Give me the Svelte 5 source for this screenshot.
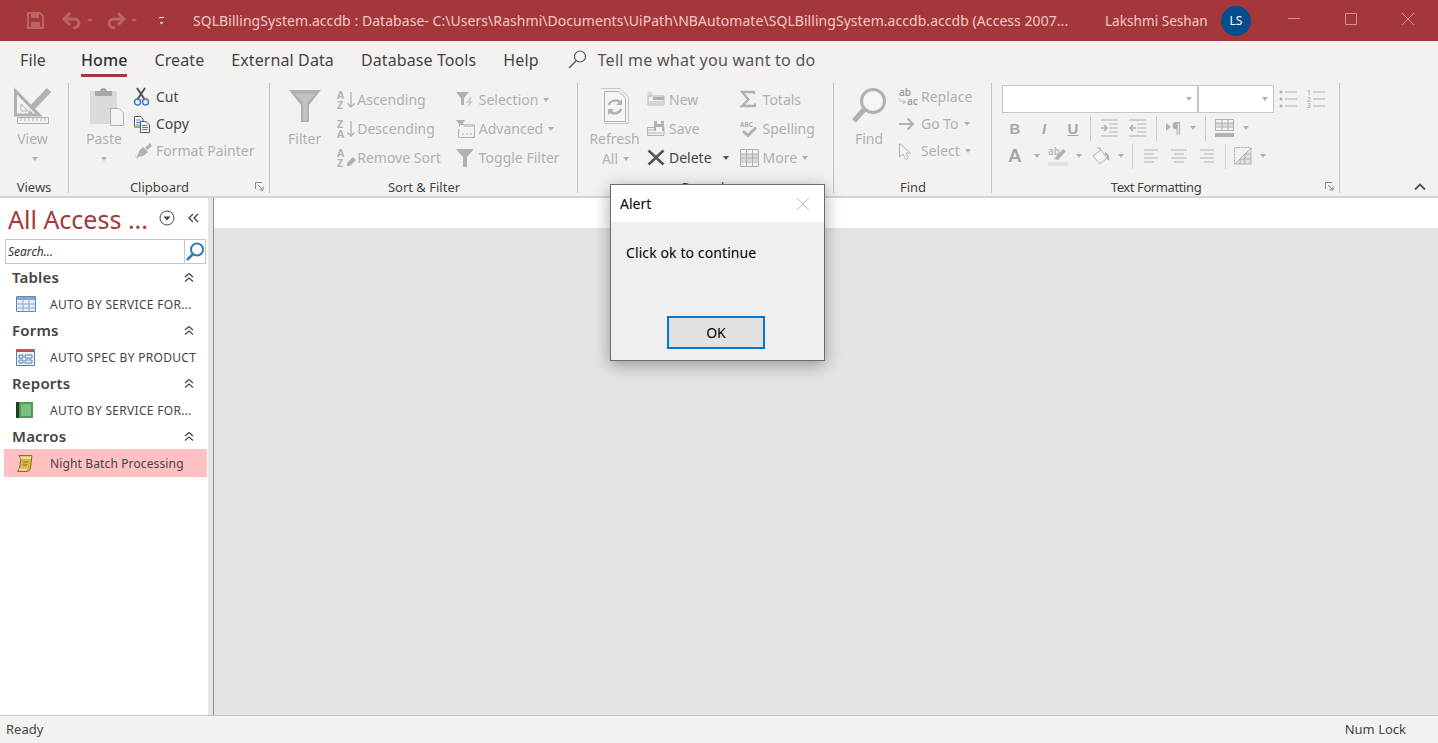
<script>
  const G = '#b3b1b0';
  const Q = '#bb6466';
  const icons = {
    save: `<path d="M1 1H13L16 4V16H1Z" fill="none" stroke="${Q}" stroke-width="2"/><path d="M4 2H12V6H4ZM4 10H13V15H4Z" fill="${Q}"/>`,
    undo: `<path d="M2 6H11C15 6 16 9 16 10C16 13 13 15 10 15" fill="none" stroke="${Q}" stroke-width="3"/><path d="M7 0L1 6L7 12" fill="none" stroke="${Q}" stroke-width="3"/>`,
    redo: `<path d="M16 6H7C3 6 2 9 2 10C2 13 5 15 8 15" fill="none" stroke="${Q}" stroke-width="3"/><path d="M11 0L17 6L11 12" fill="none" stroke="${Q}" stroke-width="3"/>`,
    view: `<path d="M1.500 3V27H25Z" fill="none" stroke="${G}" stroke-width="3"/><path d="M7 16V23H14Z" fill="#f3f2f1" stroke="${G}"/><path d="M35 2L17 21" stroke="${G}" stroke-width="6"/><path d="M14 27L15 22L19 25Z" fill="${G}"/><path d="M3.500 29.500H34.500V35.500H3.500Z" fill="#f3f2f1" stroke="${G}"/><path d="M7 30V33M11 30V33M15 30V33M19 30V33M23 30V33M27 30V33M31 30V33" stroke="${G}"/>`,
    paste: `<path d="M0 3H27V36H0Z" fill="#dcdadb"/><path d="M5 3H10C10 -1 17 -1 17 3H22V8H5Z" fill="#a9a7a7"/><path d="M20.500 20.500H29L33.500 25V37.500H20.500Z" fill="#f4f3f4" stroke="${G}"/>`,
    cut: `<path d="M6 0L14 12M14 0L6 12" stroke="#555" stroke-width="2"/><circle cx="6.500" cy="14" r="3" fill="none" stroke="#3f7fc1" stroke-width="1.500"/><circle cx="14.500" cy="14" r="3" fill="none" stroke="#3f7fc1" stroke-width="1.500"/>`,
    copy: `<path d="M3.500 1.500H10L12 4V12H3.500Z" fill="#fff" stroke="#555"/><path d="M9.500 6.500H15L18.500 10V17.500H9.500Z" fill="#fff" stroke="#555"/><path d="M5 5H10M5 7.500H9M5 10H9M11 10.500H16.500M11 12.500H17M11 14.500H17" stroke="#3f7fc1"/>`,
    painter: `<path d="M12 5L17 10L12 14L6 15L8 9Z" fill="${G}"/><path d="M14 6L19 1L21 4L16 8Z" fill="${G}"/><path d="M3 12L8 16L6 17Z" fill="#cfcdcc"/>`,
    filter: `<path d="M0 0H32L20 15V32H12V15Z" fill="${G}"/><path d="M6 4H26L18 13V30H14V13Z" fill="#c4c2c1"/>`,
    asc: `<text x="0" y="8" class="az">A</text><text x="0" y="17.500" class="az">Z</text><path d="M14 1V16M10.500 12.500L14 16L17.500 12.500" fill="none" stroke="${G}" stroke-width="1.300"/>`,
    desc: `<text x="0" y="8" class="az">Z</text><text x="0" y="17.500" class="az">A</text><path d="M14 1V16M10.500 12.500L14 16L17.500 12.500" fill="none" stroke="${G}" stroke-width="1.300"/>`,
    unsort: `<text x="0" y="8" class="az">A</text><text x="0" y="17.500" class="az">Z</text><path d="M10 14L16 8L19 11L13 17H10Z" fill="${G}"/>`,
    selection: `<path d="M0 1H13L8 7V14H5V7Z" fill="${G}"/><path d="M14 6L10 12H13L11 17L17 10H14L16 6Z" fill="#cfcdcc"/>`,
    advanced: `<path d="M0 0H9L6 4V8H3V4Z" fill="${G}"/><path d="M4.500 4.500H18.500V17.500H2.500V9" fill="#f3f2f1" stroke="${G}"/><path d="M8 4H19V7H8Z" fill="#cfcdcc"/><path d="M6 14H8M10 14H12M14 14H16" stroke="${G}"/>`,
    toggle: `<path d="M0 0H18L11 8V18H7V8Z" fill="${G}"/>`,
    refresh: `<path d="M.5 .500H19L27.500 9V35.500H3.500" fill="none" stroke="#c7c5c4"/><path d="M3.500 3.500H18L24.500 10V33.500H3.500Z" fill="#f6f5f5" stroke="${G}"/><path d="M8 17C9 12 17 11 20 15M20 21C18 26 11 27 8 22" fill="none" stroke="${G}" stroke-width="2.500"/><path d="M21 11V17H15ZM7 27V21H13Z" fill="${G}"/>`,
    new: `<path d="M1 5H17V14H1Z" fill="#f3f2f1" stroke="${G}"/><path d="M6 6H17V9H6Z" fill="${G}"/><path d="M1 10H17V14H1Z" fill="#d5d3d2"/><path d="M3 0V6M0 3H6M1 1L5 5M5 1L1 5" stroke="#cfcdcc"/>`,
    save2: `<path d="M.5 7.500H17V15.500H.5Z" fill="#f3f2f1" stroke="${G}"/><path d="M7 1H17V11H7Z" fill="${G}"/><path d="M10 1H14V4H10ZM9 7H15V11H9Z" fill="#f3f2f1"/><path d="M1 10H7M1 13H16" stroke="${G}"/>`,
    del: `<path d="M1.500 1.500L16.500 15.500M16.500 1.500L1.500 15.500" stroke="#555" stroke-width="2.600"/>`,
    sigma: `<path d="M14 3V1H2L8.500 8.500L2 15H15V12.500" fill="none" stroke="${G}" stroke-width="2.300"/>`,
    spell: `<text x="0" y="6.500" class="abc">ABC</text><path d="M3 11L8 15.500L16 7.500" fill="none" stroke="${G}" stroke-width="3"/>`,
    more: `<path d="M.5 .500H18.500V17.500H.5Z" fill="#f3f2f1" stroke="${G}"/><path d="M1 5H18V12H1Z" fill="#dbd9d8"/><path d="M1 5H18M1 9H18M1 13H18M6.500 1V17M12.500 1V17" stroke="${G}"/>`,
    find: `<circle cx="21" cy="13" r="11.500" fill="#f6f5f5" stroke="${G}" stroke-width="3"/><path d="M12.500 21L2 33" stroke="${G}" stroke-width="5"/>`,
    replace: `<text x="1" y="7.500" class="abc2">ab</text><text x="9" y="17" class="abc2">ac</text><path d="M1 10C1 14 3 14 7 14M5 12L7.500 14L5 16" fill="none" stroke="${G}"/>`,
    goto: `<path d="M1 9H15M9.500 3.500L15 9L9.500 14.500" fill="none" stroke="${G}" stroke-width="2"/>`,
    select: `<path d="M1.500 1.500V15L5 12L8 17.500L10.500 16L8 11H12.500Z" fill="#f6f5f5" stroke="${G}"/>`,
    tsearch: `<circle cx="12" cy="6.500" r="5.500" fill="none" stroke="#555" stroke-width="1.200"/><path d="M8 11L1 18" stroke="#555" stroke-width="1.400"/>`,
    bullets: `<circle cx="2" cy="2" r="1.500" fill="${G}"/><circle cx="2" cy="9" r="1.500" fill="${G}"/><circle cx="2" cy="16" r="1.500" fill="${G}"/><path d="M6 2H18M6 9H18M6 16H18" stroke="${G}"/>`,
    numbers: `<text x="0" y="4.500" class="num">1</text><text x="0" y="11.500" class="num">2</text><text x="0" y="18" class="num">3</text><path d="M6 2H18M6 9H18M6 16H18" stroke="${G}"/>`,
    indent: `<path d="M1 1H18M9 5H18M9 9H18M9 13H18M1 17H18" stroke="${G}"/><path d="M1 9H7M4 6L7 9L4 12" fill="none" stroke="${G}" stroke-width="1.600"/>`,
    outdent: `<path d="M1 1H18M9 5H18M9 9H18M9 13H18M1 17H18" stroke="${G}"/><path d="M8 9H2M5 6L2 9L5 12" fill="none" stroke="${G}" stroke-width="1.600"/>`,
    para: `<path d="M0 4L5 8L0 12Z" fill="${G}"/><text x="6" y="14" class="para">¶</text>`,
    table: `<path d="M.5 .500H18.500V11.500H.5Z" fill="#f3f2f1" stroke="${G}"/><path d="M1 4H18V7H1Z" fill="#dbd9d8"/><path d="M7 1V11M13 1V11M1 4H18M1 8H18" stroke="${G}"/><path d="M0 14H19V18H0Z" fill="${G}"/>`,
    high: `<text x="0" y="9" class="hi">ab</text><path d="M6 13L15 3L18 5L10 14Z" fill="${G}"/><path d="M0 16H20V20H0Z" fill="#e3e1e1"/>`,
    fill: `<path d="M1 9L9 3L15 11L8 17Z" fill="#f6f5f5" stroke="${G}"/><path d="M8 4V1M5 1H9" fill="none" stroke="${G}"/><path d="M13 6C15 7 17 9 16 13" fill="none" stroke="${G}" stroke-width="2"/>`,
    left: `<path d="M0 1H14M0 5H10M0 9H14M0 13H10" stroke="${G}"/>`,
    center: `<path d="M0 1H16M3 5H13M0 9H16M3 13H13" stroke="${G}"/>`,
    right: `<path d="M0 1H14M4 5H14M0 9H14M4 13H14" stroke="${G}"/>`,
    grid: `<path d="M.5 17.500V.5H17.500" fill="none" stroke="${G}" stroke-dasharray="2 1"/><path d="M1 17L17 1V17Z" fill="#e3e1e1"/><path d="M1 17L17 1M17 1V17H1M6 12V17M11 7V17M6 12H17M11 7H17" fill="none" stroke="${G}"/>`,
    launcher: `<path d="M.5 7V.5H7M3 3L8 8M8 4.500V8H4.500" fill="none" stroke="#888"/>`,
    twin: `<path d="M1 5L5 1.500L9 5M1 9.500L5 6L9 9.500" fill="none" stroke="#444" stroke-width="1.200"/>`,
    tableObj: `<path d="M.5 .500H19.500V15.500H.5Z" fill="#e6ecf6" stroke="#6a88b0"/><path d="M1 1H19V4H1Z" fill="#8aa5cb"/><path d="M1 8H19M1 12H19M7 4V15M13 4V15" stroke="#8fa8ca"/>`,
    formObj: `<path d="M.5 .500H18.500V16.500H.5Z" fill="#eef1f7" stroke="#5e7ea8"/><path d="M1 1H18V3H1Z" fill="#c2486a"/><path d="M3 6H7V9H3ZM3 11H7V14H3ZM9 6H16V9H9ZM9 11H16V14H9Z" fill="none" stroke="#5e7ea8"/>`,
    reportObj: `<path d="M2 0H17V16H2Z" fill="#4f9a55"/><path d="M5 2H15V14H5Z" fill="#7cc07f"/><path d="M0 0H3V16H0Z" fill="#1f3d24"/>`,
    macroObj: `<path d="M3 .5H16L14.500 13C14 16 12 16.500 10 16.500H1.500L3.500 13L5 4Z" fill="#d8b64e" stroke="#8b6d1f"/><path d="M4 1.500H15V4H5ZM3 13.500H11V15.500H3Z" fill="#f0dc94"/><path d="M7 7H12M6.500 10H11.500" stroke="#8b6d1f"/>`,
    blue: `<circle cx="11" cy="7.500" r="6" fill="none" stroke="#2f78b7" stroke-width="2"/><path d="M7 12L1 18" stroke="#2f78b7" stroke-width="2.500"/>`
  };

  const tabs = ['File', 'Home', 'Create', 'External Data', 'Database Tools', 'Help'];
  const sortA = [['asc', 'Ascending'], ['desc', 'Descending'], ['unsort', 'Remove Sort']];
  const sortB = [['selection', 'Selection', true], ['advanced', 'Advanced', true], ['toggle', 'Toggle Filter']];
  const recA = [['new', 'New'], ['save2', 'Save']];
  const recB = [['sigma', 'Totals'], ['spell', 'Spelling'], ['more', 'More', true]];
  const findRows = [['replace', 'Replace'], ['goto', 'Go To', true], ['select', 'Select', true]];

  const nav = [
    { head: 'Tables', icon: 'tableObj', w: 20, h: 16, item: 'AUTO BY SERVICE FOR...' },
    { head: 'Forms', icon: 'formObj', w: 19, h: 17, item: 'AUTO SPEC BY PRODUCT' },
    { head: 'Reports', icon: 'reportObj', w: 17, h: 16, item: 'AUTO BY SERVICE FOR...' },
    { head: 'Macros', icon: 'macroObj', w: 17, h: 17, item: 'Night Batch Processing', selected: true }
  ];
</script>

{#snippet ic(name, w = 18, h = 18)}
  <svg class="ic" width={w} height={h} viewBox="0 0 {w} {h}">{@html icons[name]}</svg>
{/snippet}

{#snippet caret(dark = false)}
  <span class="caret" class:dark></span>
{/snippet}

{#snippet small(row)}
  <div class="small">
    <span class="slot">{@render ic(row[0], 20)}</span>
    <span>{row[1]}</span>
    {#if row[2]}{@render caret()}{/if}
  </div>
{/snippet}

<div class="app">
  <header class="titlebar">
    <div class="qat">
      {@render ic('save', 17, 17)}
      {@render ic('undo', 18, 16)}
      <span class="qcaret"></span>
      {@render ic('redo', 18, 16)}
      <span class="qcaret"></span>
      <span class="qmore"></span>
    </div>
    <div class="doc">SQLBillingSystem.accdb : Database- C:\Users\Rashmi\Documents\UiPath\NBAutomate\SQLBillingSystem.accdb.accdb (Access 2007...</div>
    <div class="user">Lakshmi Seshan</div>
    <div class="avatar">LS</div>
    <div class="winbtns">
      <svg width="14" height="14" viewBox="0 0 14 14"><path d="M1 6.500H13" stroke="#d58f91"/></svg>
      <svg width="14" height="14" viewBox="0 0 14 14"><path d="M1.500 1.500H12.500V12.500H1.500Z" fill="none" stroke="#d58f91"/></svg>
      <svg width="14" height="14" viewBox="0 0 14 14"><path d="M1 1L13 13M13 1L1 13" stroke="#d58f91"/></svg>
    </div>
  </header>

  <nav class="tabs">
    {#each tabs as t}
      <span class="tab" class:active={t === 'Home'}>{t}</span>
    {/each}
    <span class="tell">
      {@render ic('tsearch', 18, 19)}
      <span>Tell me what you want to do</span>
    </span>
  </nav>

  <section class="ribbon">
    <div class="grp" style="width:69px">
      <div class="body center">
        <div class="large dis">
          {@render ic('view', 38, 36)}
          <span>View</span>
          {@render caret()}
        </div>
      </div>
      <div class="glabel">Views</div>
    </div>

    <div class="grp" style="width:200px">
      <div class="body clip">
        <div class="large dis paste">
          {@render ic('paste', 34, 38)}
          <span>Paste</span>
          {@render caret()}
        </div>
        <div class="col tight">
          <div class="small on"><span class="slot s25">{@render ic('cut', 20)}</span><span>Cut</span></div>
          <div class="small on"><span class="slot s25">{@render ic('copy', 20)}</span><span>Copy</span></div>
          <div class="small"><span class="slot s25">{@render ic('painter', 22)}</span><span>Format Painter</span></div>
        </div>
      </div>
      <div class="glabel lp">Clipboard<span class="launch">{@render ic('launcher', 9, 9)}</span></div>
    </div>

    <div class="grp" style="width:307px">
      <div class="body sort">
        <div class="large dis filter">
          {@render ic('filter', 32, 32)}
          <span>Filter</span>
        </div>
        <div class="col">
          {#each sortA as row}{@render small(row)}{/each}
        </div>
        <div class="col">
          {#each sortB as row}{@render small(row)}{/each}
        </div>
      </div>
      <div class="glabel">Sort &amp; Filter</div>
    </div>

    <div class="grp" style="width:255px">
      <div class="body rec">
        <div class="large dis refresh">
          {@render ic('refresh', 28, 36)}
          <span>Refresh</span>
          <span class="allrow">All {@render caret()}</span>
        </div>
        <div class="col">
          {#each recA as row}{@render small(row)}{/each}
          <div class="small on"><span class="slot">{@render ic('del', 20)}</span><span>Delete</span><span class="delcaret">{@render caret(true)}</span></div>
        </div>
        <div class="col">
          {#each recB as row}{@render small(row)}{/each}
        </div>
      </div>
      <div class="glabel">Records</div>
    </div>

    <div class="grp" style="width:157px">
      <div class="body findb">
        <div class="large dis find">
          {@render ic('find', 34, 36)}
          <span>Find</span>
        </div>
        <div class="col tight">
          {#each findRows as row}
            <div class="small"><span class="slot s23">{@render ic(row[0])}</span><span>{row[1]}</span>{#if row[2]}{@render caret()}{/if}</div>
          {/each}
        </div>
      </div>
      <div class="glabel">Find</div>
    </div>

    <div class="grp" style="width:347px">
      <div class="body fmt">
        <div class="fmt-top">
          <div class="combo wide">{@render caret()}</div>
          <div class="combo narrow">{@render caret()}</div>
          <span class="list">{@render ic('bullets', 19, 19)}</span>
          <span class="list">{@render ic('numbers', 19, 19)}</span>
        </div>
        <div class="fmt-row r2">
          <b class="fb">B</b><i class="fb">I</i><u class="fb">U</u>
          <span class="vsep first"></span>
          {@render ic('indent', 19, 18)}
          {@render ic('outdent', 19, 18)}
          <span class="vsep"></span>
          {@render ic('para', 15, 18)}
          {@render caret()}
          <span class="vsep"></span>
          {@render ic('table', 19, 18)}
          {@render caret()}
        </div>
        <div class="fmt-row r3">
          <b class="fa">A</b>{@render caret()}
          {@render ic('high', 20, 20)}{@render caret()}
          <span class="fillbox">{@render ic('fill', 18, 18)}</span>{@render caret()}
          <span class="vsep"></span>
          <span class="aligns">
            {@render ic('left', 14, 14)}
            {@render ic('center', 16, 14)}
            {@render ic('right', 14, 14)}
          </span>
          <span class="vsep"></span>
          {@render ic('grid', 18, 18)}{@render caret()}
        </div>
      </div>
      <div class="glabel lp tf">Text Formatting<span class="launch">{@render ic('launcher', 9, 9)}</span></div>
    </div>

    <div class="collapse">
      <svg width="12" height="8" viewBox="0 0 12 8"><path d="M1 6.500L6 1.500L11 6.500" fill="none" stroke="#555" stroke-width="1.800"/></svg>
    </div>
  </section>

  <main class="main">
    <aside class="pane">
      <div class="pane-head">
        <span class="pane-title">All Access ...</span>
        <svg width="16" height="16" viewBox="0 0 16 16"><circle cx="8" cy="8" r="7" fill="none" stroke="#444"/><path d="M4.500 6.500H11.500L8 10.500Z" fill="#444"/></svg>
        <svg class="back" width="11" height="10" viewBox="0 0 11 10"><path d="M5 1L1 5L5 9M10 1L6 5L10 9" fill="none" stroke="#444" stroke-width="1.300"/></svg>
      </div>
      <div class="search">
        <span class="ph">Search...</span>
        <span class="sbtn">{@render ic('blue', 19, 19)}</span>
      </div>
      {#each nav as n}
        <div class="nhead"><span class="nname">{n.head}</span>{@render ic('twin', 10, 11)}</div>
        <div class="nitem" class:sel={n.selected}>
          <span class="nic">{@render ic(n.icon, n.w, n.h)}</span>
          <span>{n.item}</span>
        </div>
      {/each}
    </aside>
    <div class="split"></div>
    <div class="work">
      <div class="strip"></div>
      <div class="canvas"></div>
    </div>
  </main>

  <footer class="status">
    <span>Ready</span>
    <span>Num Lock</span>
  </footer>

  <div class="dialog">
    <div class="dtitle">
      <span>Alert</span>
      <svg width="14" height="14" viewBox="0 0 14 14"><path d="M1 1L13 13M13 1L1 13" stroke="#bdbdbd"/></svg>
    </div>
    <div class="dbody">
      <p>Click ok to continue</p>
      <button class="ok">OK</button>
    </div>
  </div>
</div>

<style>
  :global(body) {
    margin: 0;
    overflow: hidden;
  }

  .app {
    position: relative;
    width: 1438px;
    height: 743px;
    display: flex;
    flex-direction: column;
    overflow: hidden;
    background: #f3f2f1;
    color: #444;
    font-family: 'Noto Sans', 'Open Sans', sans-serif;
    font-size: 14px;
  }

  .ic {
    display: block;
    flex: none;
    overflow: visible;
  }

  .ic :global(.az) {
    font: 700 10.5px 'Noto Sans', sans-serif;
    fill: #b3b1b0;
  }

  .ic :global(.abc) {
    font: 700 6.5px 'Noto Sans', sans-serif;
    fill: #b3b1b0;
  }

  .ic :global(.abc2) {
    font: 600 10px 'Noto Sans', sans-serif;
    fill: #a09e9d;
  }

  .ic :global(.num) {
    font: 600 6.5px 'Noto Sans', sans-serif;
    fill: #b3b1b0;
  }

  .ic :global(.para) {
    font: 700 14px 'Noto Sans', sans-serif;
    fill: #b3b1b0;
  }

  .ic :global(.hi) {
    font: 500 10px 'Noto Sans', sans-serif;
    fill: #b3b1b0;
  }

  /* title bar */
  .titlebar {
    height: 41px;
    flex: none;
    display: flex;
    align-items: center;
    background: #a4373a;
    color: #f1c9ca;
  }

  .qat {
    width: 193px;
    flex: none;
    display: flex;
    align-items: center;
    padding-left: 27px;
    box-sizing: border-box;
    gap: 6px;
  }

  .qat :global(.ic:nth-child(2)) {
    margin-left: 13px;
  }

  .qat :global(.ic:nth-child(4)) {
    margin-left: 8px;
  }

  .qcaret {
    border: 3px solid transparent;
    border-top: 3px solid #bb6466;
    border-bottom: 0;
  }

  .qmore {
    width: 5px;
    height: 4px;
    margin-left: 16px;
    border-top: 1px solid #fff;
    border-bottom: 3px solid #fff;
    clip-path: polygon(0 0, 100% 0, 100% 50%, 50% 100%, 0 50%);
  }

  .doc {
    width: 912px;
    flex: none;
    white-space: nowrap;
    font-size: 14px;
    letter-spacing: 0.05px;
  }

  .user {
    width: 116px;
    flex: none;
    font-size: 13.6px;
  }

  .avatar {
    width: 30px;
    height: 30px;
    flex: none;
    border-radius: 50%;
    background: #004e8c;
    color: #fff;
    font-size: 12px;
    display: flex;
    align-items: center;
    justify-content: center;
  }

  .winbtns {
    display: flex;
    gap: 43px;
    margin-left: 36px;
    margin-top: -3px;
  }

  /* tabs */
  .tabs {
    height: 42px;
    flex: none;
    display: flex;
    align-items: flex-start;
    padding-left: 20px;
    gap: 27px;
    font-size: 16px;
    letter-spacing: 0.1px;
  }

  .tab {
    height: 36px;
    line-height: 39px;
    box-sizing: border-box;
  }

  .tab:first-child {
    margin-right: 8px;
  }

  .tab.active {
    color: #333;
    font-weight: 500;
    border-bottom: 3px solid #a4373a;
  }

  .tell {
    display: flex;
    align-items: center;
    gap: 12px;
    height: 37px;
    margin-left: 2px;
    letter-spacing: 0.25px;
    color: #555;
  }

  /* ribbon */
  .ribbon {
    height: 115px;
    flex: none;
    display: flex;
    position: relative;
    box-sizing: border-box;
    border-bottom: 2px solid #d6d5d4;
    color: #b2b0ae;
  }

  .grp {
    box-sizing: border-box;
    height: 110px;
    border-right: 1px solid #c4c3c2;
    flex: none;
    display: flex;
    flex-direction: column;
  }

  .grp + .grp {
    margin-left: 1px;
  }

  .body {
    flex: 1;
    display: flex;
    min-height: 0;
  }

  .glabel {
    height: 19px;
    line-height: 19px;
    margin-top: 4px;
    margin-bottom: -4px;
    position: relative;
    text-align: center;
    font-size: 13px;
    color: #444;
  }

  .glabel.lp {
    padding-right: 20px;
  }

  .glabel.tf {
    letter-spacing: -0.4px;
  }

  .launch {
    position: absolute;
    right: 5px;
    top: 4px;
  }

  .center {
    justify-content: center;
    padding-right: 3px;
  }

  .large {
    display: flex;
    flex-direction: column;
    align-items: center;
    padding-top: 5px;
    font-size: 14px;
  }

  .large > span:not(.caret) {
    line-height: 20px;
  }

  .large :global(.ic) {
    margin-bottom: 5px;
  }

  .large .caret,
  .allrow .caret {
    margin-top: 8px;
  }

  .col {
    display: flex;
    flex-direction: column;
    gap: 0;
    padding-top: 2px;
  }

  .small {
    height: 29px;
    display: flex;
    align-items: center;
    white-space: nowrap;
  }

  .col.tight {
    padding-top: 0;
  }

  .tight .small {
    height: 27px;
  }

  .small.on {
    color: #444;
  }

  .slot {
    width: 20px;
    flex: none;
    display: flex;
  }

  .s25 {
    width: 25px;
  }

  .s23 {
    width: 23px;
  }

  .caret {
    display: inline-block;
    width: 0;
    height: 0;
    flex: none;
    margin-left: 5px;
    border: 3.5px solid transparent;
    border-top: 4px solid #b3b1b0;
    border-bottom: 0;
    vertical-align: middle;
  }

  .caret.dark {
    border-top-color: #555;
  }

  .delcaret {
    margin-left: 6px;
    display: flex;
  }

  .clip {
    padding-left: 20px;
    gap: 7px;
  }

  .paste :global(.ic) {
    margin-bottom: 3px;
  }

  .paste > span {
    margin-left: -6px;
  }

  .sort {
    padding-left: 17px;
    gap: 16px;
  }

  .sort .col:last-child {
    margin-left: -1px;
  }

  .sort .col:last-child .slot {
    width: 23px;
  }

  .sort .filter {
    padding-top: 7px;
  }

  .sort .filter :global(.ic) {
    margin-bottom: 7px;
  }

  .rec {
    padding-left: 11px;
    gap: 8px;
  }

  .rec .slot {
    width: 22px;
  }

  .refresh {
    width: 49px;
  }

  .allrow {
    display: flex;
    align-items: center;
    padding-left: 2px;
  }

  .allrow .caret {
    margin-top: 0;
  }

  .rec .col:last-child {
    margin-left: 3px;
  }

  .rec .col:last-child .slot {
    width: 23px;
  }

  .findb {
    padding-left: 17px;
    gap: 12px;
  }

  .fmt {
    flex-direction: column;
    padding: 2px 0 0 9px;
  }

  .fmt-top {
    display: flex;
    align-items: center;
    height: 28px;
  }

  .combo {
    box-sizing: border-box;
    height: 28px;
    background: #fff;
    border: 1px solid #c6c6c6;
    display: flex;
    align-items: center;
    justify-content: flex-end;
    padding-right: 5px;
  }

  .wide {
    width: 196px;
  }

  .narrow {
    width: 76px;
    margin-right: 5px;
  }

  .list {
    margin-right: 9px;
  }

  .fmt-row {
    display: flex;
    align-items: center;
    height: 28px;
    color: #a9a7a6;
  }

  .r2 {
    margin-top: 1px;
    padding-left: 3px;
    gap: 9px;
  }

  .r3 {
    padding-left: 6px;
    gap: 8px;
  }

  .r2 .caret,
  .r3 .caret {
    margin-left: 0;
  }

  .fb {
    width: 20px;
    text-align: center;
    font-size: 15px;
    font-family: 'Liberation Sans', sans-serif;
    font-weight: 700;
  }

  .fa {
    font: 700 19px 'Liberation Sans', sans-serif;
    width: 18px;
  }

  .fillbox {
    margin-left: 2px;
  }

  .aligns {
    display: flex;
    gap: 13px;
    margin: 0 3px;
  }

  .vsep {
    width: 1px;
    height: 25px;
    background: #cfcecd;
    flex: none;
  }

  .vsep.first {
    margin-left: -2px;
  }

  .collapse {
    position: absolute;
    right: 12px;
    top: 100px;
    display: flex;
  }

  /* main area */
  .main {
    flex: 1;
    min-height: 0;
    display: flex;
    background: #fff;
  }

  .pane {
    width: 208px;
    flex: none;
    background: #fff;
  }

  .pane-head {
    height: 39px;
    display: flex;
    align-items: center;
    padding-left: 8px;
  }

  .pane-title {
    width: 151px;
    flex: none;
    font-size: 25px;
    color: #a4373a;
    white-space: nowrap;
    margin-top: 3px;
  }

  .back {
    margin-left: 13px;
  }

  .search {
    box-sizing: border-box;
    height: 25px;
    margin: 2px 2px 0 5px;
    border: 1px solid #c8c6c4;
    display: flex;
    align-items: center;
    justify-content: space-between;
  }

  .ph {
    padding-left: 2px;
    font-style: italic;
    font-size: 12px;
    color: #333;
  }

  .sbtn {
    width: 20px;
    height: 23px;
    border-left: 1px solid #c8c6c4;
    display: flex;
    align-items: center;
    justify-content: center;
  }

  .nhead {
    height: 27px;
    display: flex;
    align-items: center;
    justify-content: space-between;
    padding: 0 14px 0 12px;
    font-size: 15px;
    font-weight: 600;
    letter-spacing: 0.2px;
    color: #444;
  }

  .nname {
    margin-bottom: 2px;
  }

  .nitem {
    height: 26px;
    display: flex;
    align-items: center;
    margin-left: 4px;
    margin-right: 1px;
    padding-left: 12px;
    font-size: 12px;
    letter-spacing: 0.3px;
    white-space: nowrap;
    color: #444;
  }

  .nitem.sel {
    height: 28px;
    margin-top: -1px;
    letter-spacing: 0.13px;
    background: #ffc0c1;
  }

  .nic {
    width: 34px;
    flex: none;
  }

  .split {
    width: 6px;
    flex: none;
    box-sizing: border-box;
    background: #e6e6e6;
    border-right: 1px solid #8e8e8e;
  }

  .work {
    flex: 1;
    display: flex;
    flex-direction: column;
  }

  .strip {
    height: 30px;
    background: #fff;
  }

  .canvas {
    flex: 1;
    background: #e4e4e4;
  }

  .status {
    height: 28px;
    flex: none;
    box-sizing: border-box;
    border-top: 1px solid #c6c6c6;
    display: flex;
    align-items: center;
    justify-content: space-between;
    padding: 0 32px 2px 6px;
    font-size: 13px;
    color: #444;
  }

  /* dialog */
  .dialog {
    position: absolute;
    left: 610px;
    top: 184px;
    width: 215px;
    height: 177px;
    box-sizing: border-box;
    border: 1px solid #6b6b6b;
    background: #efefef;
    box-shadow: 0 4px 16px rgba(0, 0, 0, 0.35);
    color: #000;
    display: flex;
    flex-direction: column;
  }

  .dtitle {
    height: 37px;
    flex: none;
    background: #fff;
    display: flex;
    align-items: center;
    justify-content: space-between;
    padding: 0 14px 0 9px;
  }

  .dbody {
    flex: 1;
    display: flex;
    flex-direction: column;
    align-items: center;
  }

  .dbody p {
    align-self: flex-start;
    margin: 21px 0 0 15px;
    line-height: 20px;
    letter-spacing: 0.1px;
  }

  .ok {
    box-sizing: border-box;
    width: 98px;
    height: 33px;
    margin-top: 53px;
    margin-left: -3px;
    background: #e1e1e1;
    border: 2px solid #0078d7;
    font: inherit;
    color: #000;
    padding: 0;
  }
</style>
